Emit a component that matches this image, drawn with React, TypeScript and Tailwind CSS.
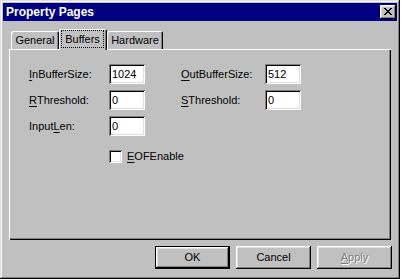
const raised =
  "shadow-[inset_-1px_-1px_#000,inset_1px_1px_#fff,inset_-2px_-2px_#808080,inset_2px_2px_#dfdfdf]";
const sunken =
  "shadow-[inset_1px_1px_#808080,inset_-1px_-1px_#fff,inset_2px_2px_#000,inset_-2px_-2px_#dfdfdf]";

const Field = ({ label, accel, value }: { label: string; accel: number; value: string }) => (
  <>
    <span className="flex items-center">
      {label.slice(0, accel)}
      <u className="underline underline-offset-[2px]">{label[accel]}</u>
      {label.slice(accel + 1)}
    </span>
    <div className={`flex h-[20px] w-[36px] items-center bg-white pl-[3px] ${sunken}`}>{value}</div>
  </>
);

const Button = ({ children, primary, disabled }: { children: React.ReactNode; primary?: boolean; disabled?: boolean }) => (
  <div className={`h-[23px] w-[75px] ${primary ? "border border-black" : ""}`}>
    <div
      className={`flex h-full w-full items-center justify-center ${raised} ${
        disabled ? "text-[#808080] [text-shadow:1px_1px_#fff]" : "text-black"
      }`}
    >
      {children}
    </div>
  </div>
);

export default function App() {
  return (
    <div
      className={`flex h-[279px] w-[400px] flex-col bg-[#c0c0c0] p-[3px] text-[11px] text-black shadow-[inset_-1px_-1px_#000,inset_1px_1px_#dfdfdf,inset_-2px_-2px_#808080,inset_2px_2px_#fff]`}
      style={{ fontFamily: '"Liberation Sans", Arial, sans-serif' }}
    >
      {/* title bar */}
      <div className="flex h-[18px] items-center justify-between bg-[#000080] pl-[3px]">
        <span className="text-[12px] font-bold text-white">Property Pages</span>
        <div className={`mr-[1px] flex h-[14px] w-[16px] items-center justify-center bg-[#c0c0c0] ${raised}`}>
          <svg width="8" height="7" viewBox="0 0 8 7" shapeRendering="crispEdges" className="-mt-[1px]">
            <path
              fill="#000"
              d="M0 0h2v1H0zM6 0h2v1H6zM1 1h2v1H1zM5 1h2v1H5zM2 2h4v1H2zM3 3h2v1H3zM2 4h4v1H2zM1 5h2v1H1zM5 5h2v1H5zM0 6h2v1H0zM6 6h2v1H6z"
            />
          </svg>
        </div>
      </div>

      <div className="mt-[8px] flex flex-1 flex-col px-[6px]">
        {/* tabs */}
        <div className="flex h-[20px] items-end pl-[2px]">
          <div className="flex h-[18px] w-[48px] items-center justify-center rounded-t-[2px] shadow-[inset_1px_1px_#fff,inset_-1px_0_#000,inset_-2px_0_#808080]">
            General
          </div>
          <div className="relative z-10 -mb-[1px] flex h-[21px] w-[48px] rounded-t-[2px] bg-[#c0c0c0] shadow-[inset_1px_1px_#fff,inset_-1px_0_#000,inset_-2px_0_#808080]">
            <span className="mt-[1px] mb-[2px] ml-[2px] mr-[3px] flex flex-1 items-center justify-center border border-dotted border-black">
              Buffers
            </span>
          </div>
          <div className="flex h-[18px] w-[56px] items-center justify-center rounded-t-[2px] shadow-[inset_1px_1px_#fff,inset_-1px_0_#000,inset_-2px_0_#808080]">
            Hardware
          </div>
        </div>

        {/* panel */}
        <div className="h-[191px] pl-[20px] pt-[15px] shadow-[inset_1px_1px_#fff,inset_-1px_-1px_#000,inset_-2px_-2px_#808080]">
          <div className="grid grid-cols-[80px_36px_36px_84px_36px] gap-y-[6px]">
            <Field label="InBufferSize:" accel={0} value="1024" />
            <span />
            <Field label="OutBufferSize:" accel={0} value="512" />
            <Field label="RThreshold:" accel={0} value="0" />
            <span />
            <Field label="SThreshold:" accel={0} value="0" />
            <Field label="InputLen:" accel={5} value="0" />
          </div>
          <div className="mt-[14px] ml-[80px] flex h-[13px] items-center gap-[5px]">
            <div className={`h-[13px] w-[13px] bg-white ${sunken}`} />
            <span>
              <u className="underline underline-offset-[2px]">E</u>OFEnable
            </span>
          </div>
        </div>

        {/* buttons */}
        <div className="-mr-[1px] mt-[6px] flex justify-end gap-[6px]">
          <Button primary>OK</Button>
          <Button>Cancel</Button>
          <Button disabled>
            <span>
              <u className="underline underline-offset-[2px]">A</u>pply
            </span>
          </Button>
        </div>
      </div>
    </div>
  );
}
